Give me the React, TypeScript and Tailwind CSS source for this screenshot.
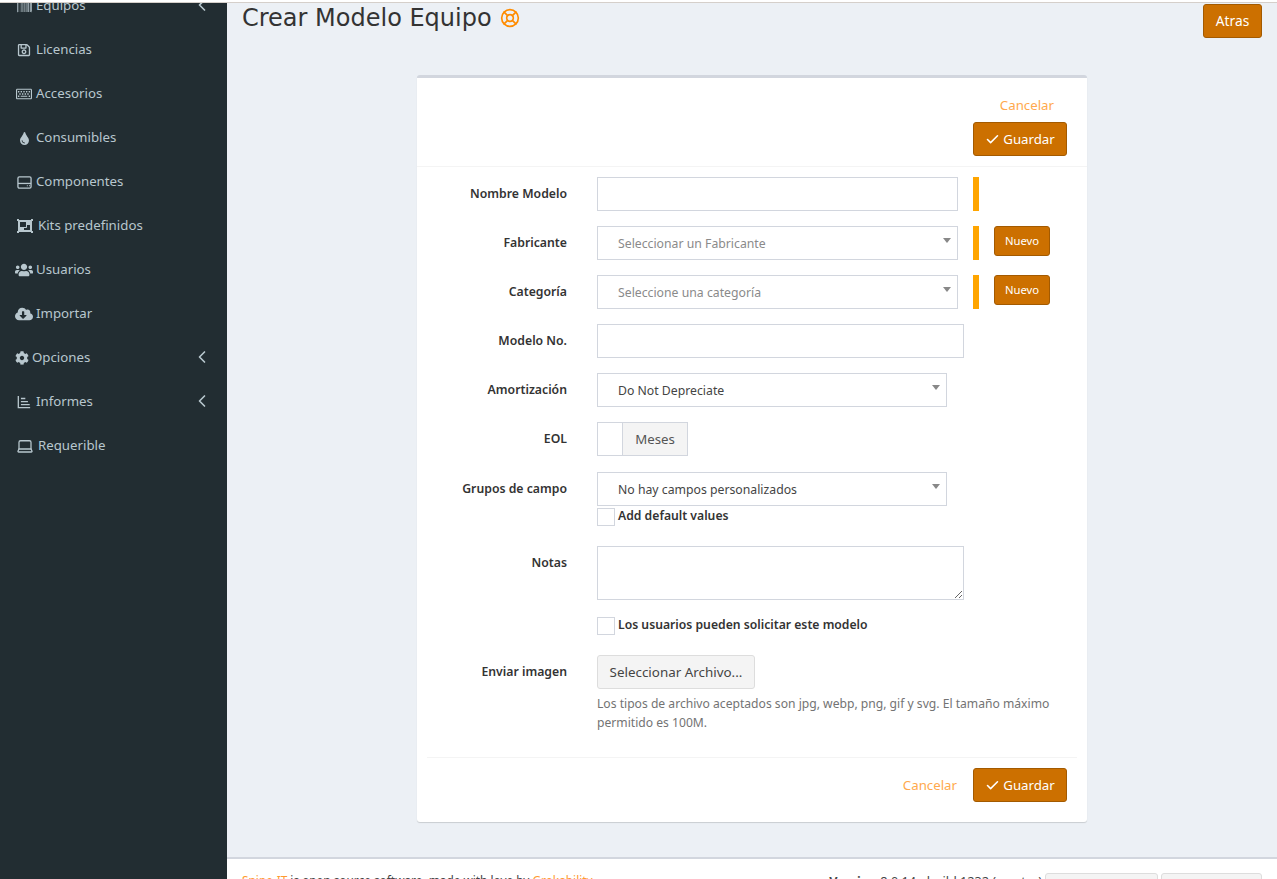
import React from 'react';
import { ChevronLeft, Check, LifeBuoy, Laptop } from 'lucide-react';
import { FaBarcode, FaRegSave, FaRegKeyboard, FaTint, FaObjectGroup, FaUsers, FaCloudDownloadAlt, FaCog } from 'react-icons/fa';

const FONT = "font-['Noto_Sans',sans-serif]";

// hard drive box, the fa one is a trapezoid
const DriveIcon = ({ className }: { className?: string }) => (
  <svg viewBox="0 0 16 16" className={className} fill="none" stroke="currentColor" strokeWidth="1.4">
    <rect x="1" y="2" width="14" height="12" rx="1.5" />
    <path d="M1 9h14" />
    <path d="M10.5 11.5h1M12.8 11.5h1" strokeWidth="1.2" />
  </svg>
);

// horizontal bars on an L shaped axis
const ReportIcon = ({ className }: { className?: string }) => (
  <svg viewBox="0 0 16 16" className={className} fill="none" stroke="currentColor" strokeWidth="1.5">
    <path d="M1.5 1v13.5H15" />
    <path d="M4.5 4h5M4.5 7.5h8M4.5 11h10" />
  </svg>
);

const navItems = [
  { label: 'Equipos', icon: <FaBarcode className="w-[15px] h-[15px] ml-[2px]" />, chevron: true, gap: 'w-[21px]' },
  { label: 'Licencias', icon: <FaRegSave className="w-[14px] h-[14px] ml-[2px]" />, gap: 'w-[21px]' },
  { label: 'Accesorios', icon: <FaRegKeyboard className="w-[16px] h-[16px] ml-[1px]" />, gap: 'w-[21px]' },
  { label: 'Consumibles', icon: <FaTint className="w-[13px] h-[13px] ml-[3px]" />, gap: 'w-[21px]' },
  { label: 'Componentes', icon: <DriveIcon className="w-[15px] h-[15px] ml-[2px]" />, gap: 'w-[21px]' },
  { label: 'Kits predefinidos', icon: <FaObjectGroup className="w-[16px] h-[16px] ml-[2px]" />, gap: 'w-[23px]' },
  { label: 'Usuarios', icon: <FaUsers className="w-[18px] h-[18px]" />, gap: 'w-[21px]' },
  { label: 'Importar', icon: <FaCloudDownloadAlt className="w-[18px] h-[18px]" />, gap: 'w-[21px]' },
  { label: 'Opciones', icon: <FaCog className="w-[14px] h-[14px]" />, chevron: true, gap: 'w-[17px]' },
  { label: 'Informes', icon: <ReportIcon className="w-[14px] h-[14px] ml-[2px]" />, chevron: true, gap: 'w-[21px]' },
  { label: 'Requerible', icon: <Laptop className="w-[18px] h-[18px] ml-[1px]" strokeWidth={1.7} />, gap: 'w-[23px]' },
];

const Sidebar = () => (
  <aside className="w-[227px] shrink-0 bg-[#222d32] text-[#b8c7ce] overflow-hidden">
    <nav className="-mt-[19px] pl-[15px] pr-[20px]">
      {navItems.map((item) => (
        <div key={item.label} className="h-[44px] flex items-center text-[13.25px]">
          <span className={`${item.gap} flex items-center shrink-0`}>{item.icon}</span>
          <span className="flex-1">{item.label}</span>
          {item.chevron && <ChevronLeft className="w-[20px] h-[20px] -mr-[5px] mb-[2px]" strokeWidth={2} />}
        </div>
      ))}
    </nav>
  </aside>
);

const OrangeButton = ({ children, className }: { children: React.ReactNode; className?: string }) => (
  <button className={`bg-[#cc7000] border border-[#a35a00] rounded-[3px] text-white flex items-center justify-center ${className ?? ''}`}>
    {children}
  </button>
);

const SaveButton = () => (
  <OrangeButton className="w-[94px] h-[34px] text-[13.25px] gap-[3px]">
    <Check className="w-[15px] h-[15px]" strokeWidth={2.5} />
    <span className="mt-[2px]">Guardar</span>
  </OrangeButton>
);

const Row = ({ label, className, children }: { label: string; className?: string; children: React.ReactNode }) => (
  <div className={`flex ${className ?? ''}`}>
    <label className="w-[150px] shrink-0 text-right font-semibold text-[#333] text-[12.25px] leading-[34px]">{label}</label>
    <div className="ml-[30px] flex-1">{children}</div>
  </div>
);

const Required = () => <span className="w-[6px] h-[34px] bg-[#ffa500] ml-[15px] shrink-0" />;

const SelectBox = ({ text, muted, className }: { text: string; muted?: boolean; className: string }) => (
  <div className={`h-[34px] border border-[#d2d6de] pl-[20px] pr-[6px] flex items-center justify-between text-[12.25px] ${muted ? 'text-[#8a8a8a]' : 'text-[#444]'} ${className}`}>
    <span className="mt-[3px]">{text}</span>
    <span className="w-0 h-0 border-x-[4px] border-x-transparent border-t-[5px] border-t-[#888] mb-[6px]" />
  </div>
);

const CheckRow = ({ label, className }: { label: string; className?: string }) => (
  <div className={`flex items-start gap-[3px] ${className ?? ''}`}>
    <span className="w-[18px] h-[18px] border border-[#d2d6de] bg-white shrink-0" />
    <span className="font-semibold text-[#333] text-[12.2px] leading-[16px]">{label}</span>
  </div>
);

const FormCard = () => (
  <div className="mt-[37px] w-[670px] h-[747px] mx-auto bg-white border-t-[3px] border-t-[#d2d6de] rounded-[3px] shadow-[0_1px_1px_rgba(0,0,0,0.15)]">
    <div className="h-[89px] border-b border-[#f4f4f4] pr-[20px] pt-[17px] flex flex-col items-end">
      <a className="text-[#ffa94d] text-[13.25px] leading-[20px] mr-[13px]">Cancelar</a>
      <div className="mt-[7px]"><SaveButton /></div>
    </div>

    <div className="pt-[10px] pr-[20px]">
      <Row label="Nombre Modelo">
        <div className="flex">
          <div className="w-[361px] h-[34px] border border-[#d2d6de]" />
          <Required />
        </div>
      </Row>
      <Row label="Fabricante" className="mt-[15px]">
        <div className="flex">
          <SelectBox muted text="Seleccionar un Fabricante" className="w-[361px]" />
          <Required />
          <OrangeButton className="ml-[15px] w-[56px] h-[30px] text-[11.25px]">Nuevo</OrangeButton>
        </div>
      </Row>
      <Row label="Categoría" className="mt-[15px]">
        <div className="flex">
          <SelectBox muted text="Seleccione una categoría" className="w-[361px]" />
          <Required />
          <OrangeButton className="ml-[15px] w-[56px] h-[30px] text-[11.25px]">Nuevo</OrangeButton>
        </div>
      </Row>
      <Row label="Modelo No." className="mt-[15px]">
        <div className="w-[367px] h-[34px] border border-[#d2d6de]" />
      </Row>
      <Row label="Amortización" className="mt-[15px]">
        <SelectBox text="Do Not Depreciate" className="w-[350px]" />
      </Row>
      <Row label="EOL" className="mt-[15px]">
        <div className="flex w-[91px] h-[34px] border border-[#d2d6de]">
          <div className="w-[25px] border-r border-[#d2d6de]" />
          <div className="flex-1 bg-[#f4f4f4] flex items-center justify-center pt-[2px] text-[13.25px] text-[#555]">Meses</div>
        </div>
      </Row>
      <Row label="Grupos de campo" className="mt-[16px]">
        <SelectBox text="No hay campos personalizados" className="w-[350px]" />
        <CheckRow label="Add default values" className="mt-[2px]" />
      </Row>
      <Row label="Notas" className="mt-[20px]">
        <textarea readOnly className="block w-[367px] h-[54px] border border-[#d2d6de] outline-none" />
      </Row>
      <Row label="" className="mt-[17px] h-[18px]">
        <CheckRow label="Los usuarios pueden solicitar este modelo" />
      </Row>
      <Row label="Enviar imagen" className="mt-[20px]">
        <div className="w-[158px] h-[34px] bg-[#f4f4f4] border border-[#ddd] rounded-[3px] flex items-center justify-center text-[13.4px] text-[#444]">
          Seleccionar Archivo...
        </div>
        <p className="mt-[5px] w-[460px] text-[12.13px] leading-[19px] text-[#737373]">
          Los tipos de archivo aceptados son jpg, webp, png, gif y svg. El tamaño máximo permitido es 100M.
        </p>
      </Row>
    </div>

    <div className="mt-[25px] mx-[10px] border-t border-[#f4f4f4] pt-[10px] pr-[10px] flex items-center justify-end">
      <a className="text-[#ffa94d] text-[13.25px] mr-[16px] mt-[2px]">Cancelar</a>
      <SaveButton />
    </div>
  </div>
);

export default function App() {
  return (
    <div className={`${FONT} h-[879px] w-[1277px] overflow-hidden flex flex-col bg-[#ecf0f5]`}>
      <div className="h-[3px] shrink-0 bg-white border-b border-[#d5cfca]" />
      <div className="flex flex-1 min-h-0">
        <Sidebar />
        <main className="flex-1 min-w-0 flex flex-col">
          <div className="flex-1 min-h-0">
            <div className="flex items-start justify-between pl-[15px] pr-[15px]">
              <h1 className="flex items-center text-[24px] leading-[30px] text-[#333] font-['DejaVu_Sans',sans-serif]">
                Crear Modelo Equipo
                <LifeBuoy className="ml-[8px] w-[20px] h-[20px] text-[#ff8c00]" strokeWidth={2} />
              </h1>
              <OrangeButton className="mt-[1px] w-[59px] h-[34px] text-[13.75px]">Atras</OrangeButton>
            </div>
            <FormCard />
          </div>
          <footer className="h-[22px] shrink-0 bg-white border-t-2 border-[#d2d6de] pl-[15px] pr-[15px] pt-[13px] flex justify-between items-start text-[#444]">
            <div className="whitespace-nowrap text-[11.85px]">
              <a className="text-[#ff9a2e]">Snipe-IT</a> is open source software, made with love by <a className="text-[#ff9a2e]">Grokability</a>
            </div>
            <div className="flex items-start whitespace-nowrap text-[12.7px]">
              <span className="mr-[3px]"><b>Version</b> 8.0.14 - build 1232 (master)</span>
              <span className="w-[113px] h-[30px] mt-[1px] border border-[#ddd] bg-[#f4f4f4] rounded-[3px]" />
              <span className="ml-[3px] w-[101px] h-[30px] mt-[1px] border border-[#ddd] bg-[#f4f4f4] rounded-[3px]" />
            </div>
          </footer>
        </main>
      </div>
    </div>
  );
}
